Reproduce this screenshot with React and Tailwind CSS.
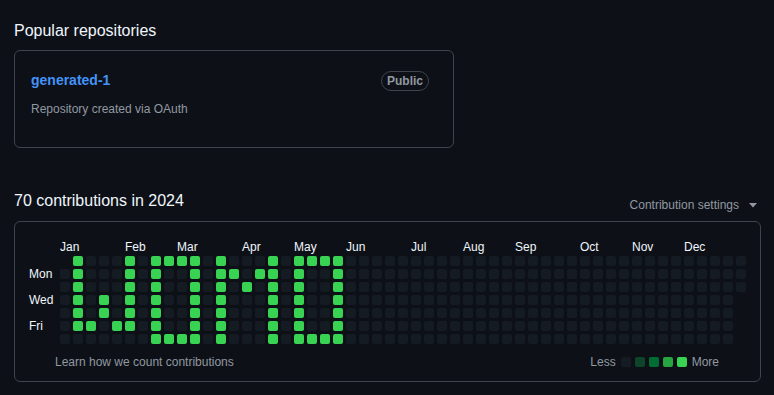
import React from "react";

const WEEKS = 53;

// greens per column: { col: [rows] }
const GREEN = {
  1: [0, 1, 2, 3, 4, 5],
  2: [5],
  3: [3, 4],
  4: [5],
  5: [0, 1, 2, 3, 4, 5],
  7: [0, 1, 2, 3, 4, 5, 6],
  8: [0, 6],
  9: [0, 6],
  10: [0, 1, 2, 3, 4, 5, 6],
  12: [0, 1, 2, 3, 4, 5, 6],
  13: [1],
  14: [2],
  15: [1],
  16: [0, 1, 2, 3, 4, 5, 6],
  18: [0, 1, 2, 3, 4, 5, 6],
  19: [0, 6],
  20: [0, 6],
  21: [0, 1, 2, 3, 4, 5, 6],
};

const MONTHS = [
  ["Jan", 0],
  ["Feb", 5],
  ["Mar", 9],
  ["Apr", 14],
  ["May", 18],
  ["Jun", 22],
  ["Jul", 27],
  ["Aug", 31],
  ["Sep", 35],
  ["Oct", 40],
  ["Nov", 44],
  ["Dec", 48],
];

const DAYS = ["", "Mon", "", "Wed", "", "Fri", ""];

const Cell = ({ col, row }) => {
  const hidden = (col === 0 && row === 0) || (col === WEEKS - 1 && row > 2);
  if (hidden) return <div className="w-[10px] h-[10px]" />;
  const on = GREEN[col]?.includes(row);
  return (
    <div
      className={`w-[10px] h-[10px] rounded-[2px] ${
        on ? "bg-[#39d353]" : "bg-[#151b23]"
      }`}
    />
  );
};

const App = () => {
  return (
    <div
      className="w-[774px] h-[395px] bg-[#0d1117] text-[#f0f6fc] px-[14px] pt-[19px] overflow-hidden"
      style={{ fontFamily: '"Liberation Sans", Arial, sans-serif' }}
    >
      <h2 className="text-[16px] leading-6 mb-[7px]">Popular repositories</h2>
      <div className="w-[440px] h-[98px] border border-[#3d444d] rounded-md px-4 pt-[17px]">
        <div className="flex items-center justify-between h-6">
          <a className="text-[14px] font-bold text-[#4493f8]">generated-1</a>
          <span className="border border-[#3d444d] rounded-full px-[5px] h-[20px] leading-[18px] text-[12px] font-bold text-[#9198a1] mr-[8px] mt-[2px]">
            Public
          </span>
        </div>
        <p className="mt-2 text-[12px] leading-[18px] text-[#9198a1]">
          Repository created via OAuth
        </p>
      </div>

      <div className="mt-[41px] flex items-end justify-between mb-2">
        <h2 className="text-[16px] leading-6">70 contributions in 2024</h2>
        <button className="flex items-center gap-[10px] text-[12px] leading-[18px] text-[#9198a1] mr-[3px] -mb-px">
          Contribution settings
          <svg width="8" height="5" viewBox="0 0 8 5">
            <path d="M0 0h8L4 4.5z" fill="#9198a1" />
          </svg>
        </button>
      </div>

      <div className="w-[747px] h-[161px] border border-[#3d444d] rounded-md pl-[14px] pt-[17px]">
        <div className="flex">
          <div className="w-[31px] pt-[17px] flex flex-col gap-[3px] text-[12px]">
            {DAYS.map((d, i) => (
              <div key={i} className="h-[10px] leading-[10px]">
                {d}
              </div>
            ))}
          </div>
          <div>
            <div className="grid grid-cols-[repeat(53,10px)] gap-x-[3px] h-[16px] mb-[1px] text-[12px] leading-[17px]">
              {MONTHS.map(([m, c]) => (
                <span
                  key={m}
                  className="whitespace-nowrap"
                  style={{ gridColumnStart: c + 1 }}
                >
                  {m}
                </span>
              ))}
            </div>
            <div className="flex gap-[3px]">
              {Array.from({ length: WEEKS }).map((_, col) => (
                <div key={col} className="flex flex-col gap-[3px]">
                  {Array.from({ length: 7 }).map((_, row) => (
                    <Cell key={row} col={col} row={row} />
                  ))}
                </div>
              ))}
            </div>
          </div>
        </div>
        <div className="mt-[9px] ml-[26px] mr-[41px] flex items-center justify-between text-[12px] leading-[18px] text-[#9198a1]">
          <span>Learn how we count contributions</span>
          <div className="flex items-center gap-[4px]">
            <span className="mr-[1px]">Less</span>
            <div className="w-[10px] h-[10px] rounded-[2px] bg-[#151b23]" />
            <div className="w-[10px] h-[10px] rounded-[2px] bg-[#0e4429]" />
            <div className="w-[10px] h-[10px] rounded-[2px] bg-[#006d32]" />
            <div className="w-[10px] h-[10px] rounded-[2px] bg-[#26a641]" />
            <div className="w-[10px] h-[10px] rounded-[2px] bg-[#39d353]" />
            <span className="ml-[1px]">More</span>
          </div>
        </div>
      </div>
    </div>
  );
};

export default App;
